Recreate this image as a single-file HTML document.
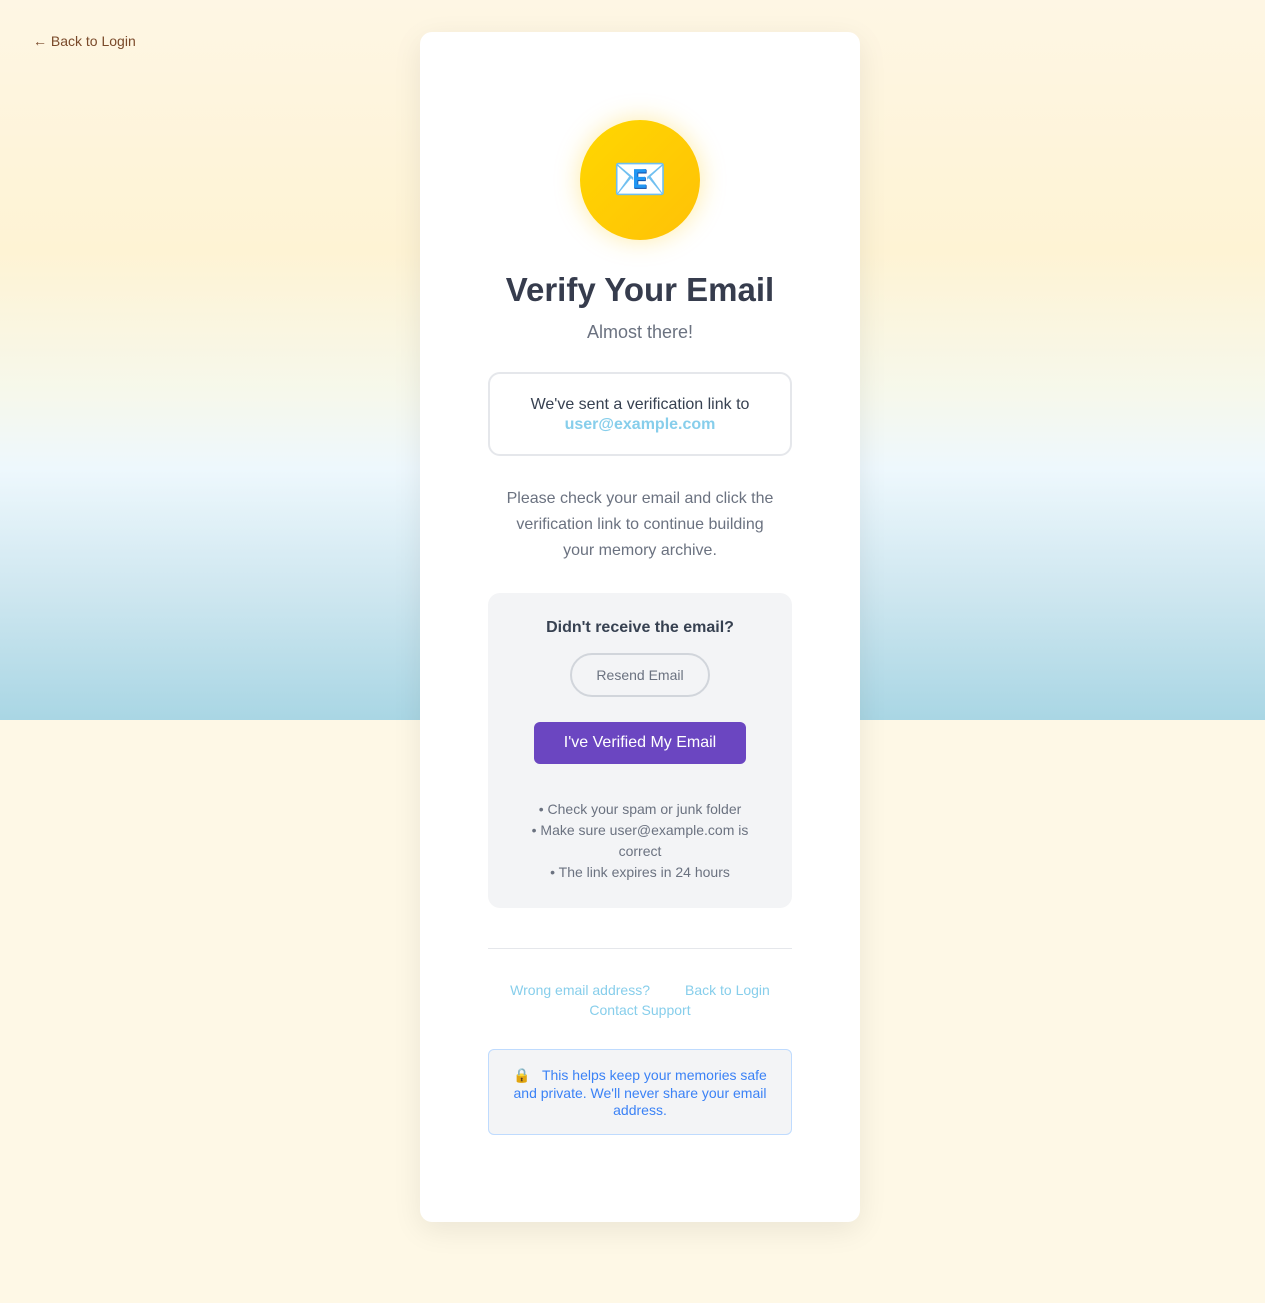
<!DOCTYPE html>
<html><head><meta charset="utf-8"><style>
*{box-sizing:border-box;margin:0;padding:0}
body{width:1265px;height:1303px;position:relative;font-family:"Liberation Sans",sans-serif;background:#fef8e6;overflow:hidden}
.bg{position:absolute;left:0;top:0;width:1265px;height:720px;background:linear-gradient(180deg,#fef6e4 0%,#fef3d4 35%,#f6f8ec 55%,#eef8fd 65%,#cfe7f0 82%,#a9d6e4 100%)}
.back{position:absolute;left:33px;top:33px;color:#7a4a2a;font-size:14px}
.card{position:absolute;left:420px;top:32px;width:440px;height:1190px;background:#fff;border-radius:12px;box-shadow:0 8px 30px rgba(0,0,0,.08);text-align:center}
.circle{position:absolute;left:160px;top:88px;width:120px;height:120px;border-radius:50%;background:linear-gradient(135deg,#ffd700,#ffc107);box-shadow:0 0 25px rgba(255,200,0,.35);font-size:44px;line-height:120px}
h1{position:absolute;left:0;width:440px;top:239px;font-size:33px;color:#363c4d;font-weight:bold}
.sub{position:absolute;left:0;width:440px;top:290px;font-size:18px;color:#6b7280}
.sent{position:absolute;left:68px;top:340px;width:304px;height:84px;border:2px solid #e5e7eb;border-radius:12px;padding-top:21px;font-size:16px;color:#374151;line-height:20px}
.sent b{color:#87ceeb}
.para{position:absolute;left:40px;width:360px;top:454px;font-size:16px;line-height:26px;color:#6b7280}
.gray{position:absolute;left:68px;top:561px;width:304px;height:315px;background:#f3f4f6;border-radius:12px}
.gray h3{margin-top:26px;font-size:16px;color:#374151}
.resend{position:absolute;left:82px;top:60px;width:140px;height:44px;border:2px solid #d1d5db;border-radius:22px;line-height:40px;font-size:14px;color:#6b7280}
.verify{position:absolute;left:46px;top:129px;width:212px;height:42px;background:#6b46c1;border-radius:6px;color:#fff;font-size:16px;line-height:42px}
.tips{position:absolute;left:30px;width:244px;top:206px;font-size:14px;line-height:21px;color:#6b7280}
.hr{position:absolute;left:68px;width:304px;top:916px;border-top:1px solid #e5e7eb}
.links{position:absolute;left:68px;width:304px;top:948px;font-size:14px;line-height:20px;color:#87ceeb}
.note{position:absolute;left:68px;top:1017px;width:304px;height:86px;background:#f3f4f6;border:1px solid #bfdbfe;border-radius:6px;padding:17px 12px 0;font-size:14px;line-height:17.5px;color:#3b82f6}
</style></head><body>
<div class="bg"></div>
<div class="back">← Back to Login</div>
<div class="card">
<div class="circle">📧</div>
<h1>Verify Your Email</h1>
<div class="sub">Almost there!</div>
<div class="sent">We've sent a verification link to<br><b>user@example.com</b></div>
<div class="para">Please check your email and click the<br>verification link to continue building<br>your memory archive.</div>
<div class="gray"><h3>Didn't receive the email?</h3>
<div class="resend">Resend Email</div>
<div class="verify">I've Verified My Email</div>
<div class="tips">• Check your spam or junk folder<br>• Make sure user@example.com is correct<br>• The link expires in 24 hours</div></div>
<div class="hr"></div>
<div class="links">Wrong email address? &nbsp; &nbsp; &nbsp; &nbsp; Back to Login<br>Contact Support</div>
<div class="note">🔒 &nbsp; This helps keep your memories safe and private. We'll never share your email address.</div>
</div>
</body></html>
